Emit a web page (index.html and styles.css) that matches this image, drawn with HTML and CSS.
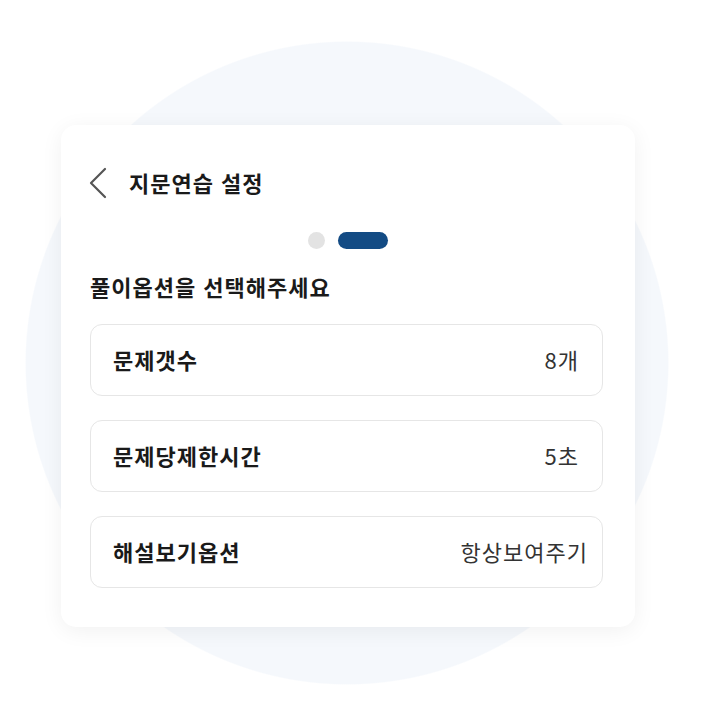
FILE: index.html
```html
<!DOCTYPE html>
<html lang="ko">
<head>
<meta charset="utf-8">
<link rel="stylesheet" href="styles.css">
</head>
<body>
<div class="page">
  <div class="card">
    <div class="header">
      <svg class="back" width="20" height="32" viewBox="0 0 20 32"><path d="M17 2 L3 16 L17 30" fill="none" stroke="#555" stroke-width="2.2" stroke-linecap="round" stroke-linejoin="round"/></svg>
      <h1 class="title">지문연습 설정</h1>
    </div>
    <div class="dots"><span class="dot"></span><span class="dot active"></span></div>
    <h2 class="subtitle">풀이옵션을 선택해주세요</h2>
    <ul class="options">
      <li class="option"><span class="label">문제갯수</span><span class="value">8개</span></li>
      <li class="option"><span class="label">문제당제한시간</span><span class="value">5초</span></li>
      <li class="option"><span class="label">해설보기옵션</span><span class="value value-long">항상보여주기</span></li>
    </ul>
  </div>
</div>
</body>
</html>
```
FILE: styles.css
```css
* { box-sizing: border-box; }
html, body { margin: 0; padding: 0; }
body {
  width: 712px;
  height: 722px;
  overflow: hidden;
  background: radial-gradient(circle 322px at 347px 363px, #f5f8fc 99.6%, #ffffff 100%);
  font-family: "Noto Sans CJK KR", "Noto Sans", sans-serif;
  color: #222;
}
.page {
  padding: 125px 0 0 61px;
}
.card {
  width: 574px;
  height: 502px;
  background: #fff;
  border-radius: 15px;
  box-shadow: 0 4px 22px rgba(0, 0, 0, 0.06);
  padding: 42px 32px 0 29px;
  display: flex;
  flex-direction: column;
}
.header {
  display: flex;
  align-items: center;
  height: 32px;
  margin-left: -2px;
}
.back { display: block; }
.title {
  margin: -3px 0 0 21px;
  font-size: 22px;
  font-weight: 700;
  letter-spacing: 1px;
  line-height: 32px;
  color: #1a1a1a;
}
.dots {
  display: flex;
  justify-content: center;
  gap: 13px;
  margin-top: 33px;
  margin-right: -3px;
}
.dot {
  width: 17px;
  height: 17px;
  border-radius: 9px;
  background: #e3e3e3;
}
.dot.active {
  width: 50px;
  background: #134b84;
}
.subtitle {
  margin: 22px 0 0 0;
  font-size: 22px;
  font-weight: 700;
  letter-spacing: 1px;
  line-height: 30px;
  color: #1a1a1a;
}
.options {
  list-style: none;
  margin: 23px 0 0 0;
  padding: 0;
  display: flex;
  flex-direction: column;
  gap: 24px;
}
.option {
  height: 72px;
  border: 1.5px solid #e6e6e6;
  border-radius: 12px;
  display: flex;
  align-items: center;
  justify-content: space-between;
  padding: 0 23px 2px 22px;
}
.label {
  font-size: 22px;
  font-weight: 700;
  letter-spacing: 1px;
  color: #1a1a1a;
}
.value {
  font-size: 22px;
  font-weight: 400;
  letter-spacing: 1px;
  color: #333;
}
.value-long {
  margin-right: -9px;
}
```
